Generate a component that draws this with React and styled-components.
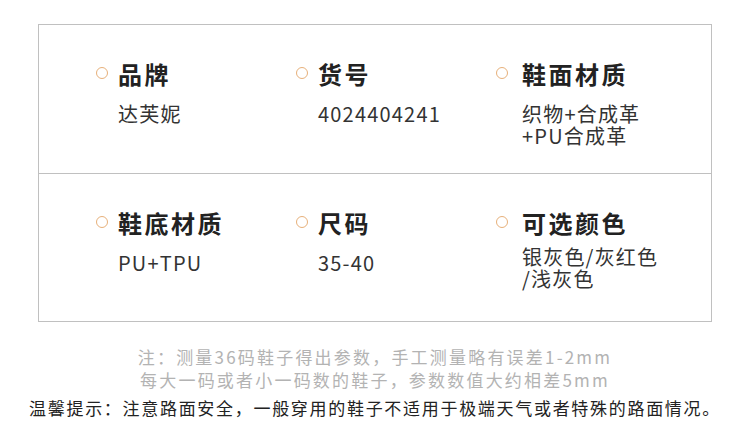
import styled, { createGlobalStyle } from 'styled-components'

const GlobalStyle = createGlobalStyle`
  html, body {
    margin: 0;
    padding: 0;
    background: #fff;
  }
  body {
    font-family: "Noto Sans CJK SC", "Noto Sans", sans-serif;
  }
`

const specs = [
  [
    { title: '品牌', value: ['达芙妮'] },
    { title: '货号', value: ['4024404241'] },
    { title: '鞋面材质', value: ['织物+合成革', '+PU合成革'], wide: true },
  ],
  [
    { title: '鞋底材质', value: ['PU+TPU'] },
    { title: '尺码', value: ['35-40'] },
    { title: '可选颜色', value: ['银灰色/灰红色', '/浅灰色'], wide: true, lift: true },
  ],
]

export default function App() {
  return (
    <Page>
      <GlobalStyle />
      <Table>
        {specs.map((row, i) => (
          <Row key={i}>
            {row.map((cell) => (
              <Cell key={cell.title} $wide={cell.wide}>
                <Title>
                  <Dot />
                  <span>{cell.title}</span>
                </Title>
                <Value $lift={cell.lift}>
                  {cell.value.map((line) => (
                    <div key={line}>{line}</div>
                  ))}
                </Value>
              </Cell>
            ))}
          </Row>
        ))}
      </Table>
      <Notes>
        <Note>注：测量36码鞋子得出参数，手工测量略有误差1-2mm</Note>
        <Note>每大一码或者小一码数的鞋子，参数数值大约相差5mm</Note>
        <Tip>温馨提示：注意路面安全，一般穿用的鞋子不适用于极端天气或者特殊的路面情况。</Tip>
      </Notes>
    </Page>
  )
}

const Page = styled.div`
  width: 750px;
  height: 448px;
  padding-top: 24px;
  box-sizing: border-box;
  overflow: hidden;
`

const Table = styled.div`
  margin: 0 38px;
  border: 1.5px solid #c0c0c0;
`

const Row = styled.div`
  display: grid;
  grid-template-columns: 200px 200px 1fr;
  height: 148px;
  padding: 33px 0 0 57px;
  box-sizing: border-box;

  & + & {
    border-top: 1.5px solid #c0c0c0;
  }
`

const Cell = styled.div`
  display: flex;
  flex-direction: column;
  --gap: ${(p) => (p.$wide ? '14px' : '10px')};
`

const Title = styled.div`
  display: flex;
  align-items: center;
  gap: var(--gap);
  height: 30px;
  font-size: 24px;
  font-weight: 700;
  letter-spacing: 2.5px;
  color: #222;
`

const Dot = styled.i`
  width: 12px;
  height: 12px;
  box-sizing: border-box;
  border: 1.6px solid #e7b07a;
  border-radius: 50%;
  flex: none;
`

const Value = styled.div`
  margin-top: ${(p) => (p.$lift ? '9px' : '15px')};
  padding-left: calc(12px + var(--gap));
  font-size: 20px;
  line-height: 22px;
  letter-spacing: 1.2px;
  color: #333;
`

const Notes = styled.div`
  margin-top: 23px;
  text-align: center;
`

const Note = styled.div`
  font-size: 17px;
  line-height: 23px;
  letter-spacing: 2.2px;
  color: #b3b3b3;
`

const Tip = styled.div`
  margin-top: 5px;
  font-size: 17px;
  line-height: 23px;
  letter-spacing: 1.7px;
  color: #222;
  white-space: nowrap;
`
